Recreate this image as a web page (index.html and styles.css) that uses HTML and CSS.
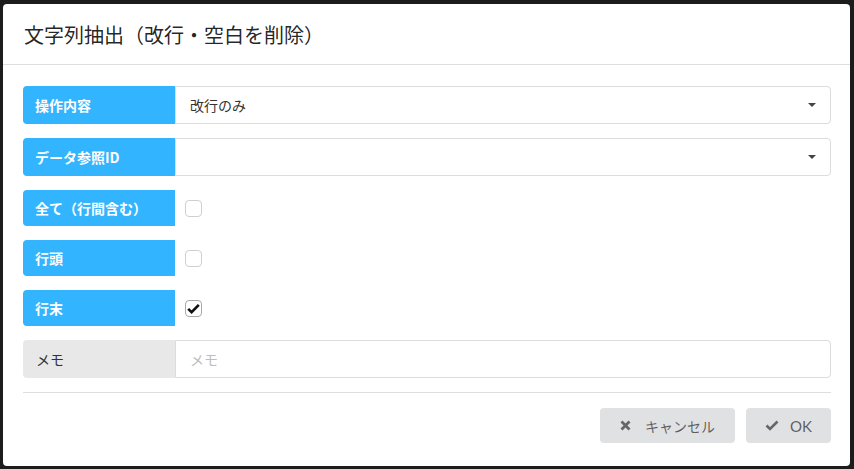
FILE: index.html
```html
<!DOCTYPE html>
<html lang="ja">
<head>
<meta charset="utf-8">
<link rel="stylesheet" href="styles.css">
</head>
<body>
<div class="dialog">
  <div class="header">文字列抽出（改行・空白を削除）</div>
  <div class="content">
    <div class="row">
      <div class="label">操作内容</div>
      <div class="field select"><span class="value">改行のみ</span><span class="caret"></span></div>
    </div>
    <div class="row">
      <div class="label">データ参照ID</div>
      <div class="field select"><span class="value"></span><span class="caret"></span></div>
    </div>
    <div class="row short">
      <div class="label">全て（行間含む）</div>
      <div class="check"></div>
    </div>
    <div class="row short">
      <div class="label">行頭</div>
      <div class="check"></div>
    </div>
    <div class="row short">
      <div class="label">行末</div>
      <div class="check checked"><svg width="13" height="11" viewBox="0 0 13 11"><path d="M1.2 5.8 L4.6 9.2 L11.8 1.8" fill="none" stroke="#111" stroke-width="2.6" stroke-linejoin="miter"/></svg></div>
    </div>
    <div class="row">
      <div class="label gray">メモ</div>
      <div class="field"><span class="placeholder">メモ</span></div>
    </div>
    <div class="divider"></div>
    <div class="actions">
      <button class="btn cancel"><svg width="11" height="11" viewBox="0 0 11 11"><path d="M1.5 1.5 L9.5 9.5 M9.5 1.5 L1.5 9.5" stroke="#666" stroke-width="2.8"/></svg><span>キャンセル</span></button>
      <button class="btn ok"><svg width="14" height="11" viewBox="0 0 14 11"><path d="M1.5 5.5 L5 9 L12.5 1.5" fill="none" stroke="#666" stroke-width="2.6"/></svg><span>OK</span></button>
    </div>
  </div>
</div>
</body>
</html>
```

FILE: styles.css
```css
html, body {
  margin: 0;
  padding: 0;
}
body {
  background: #1c1c1c;
  width: 854px;
  height: 469px;
  padding: 4px 0 0 3px;
  box-sizing: border-box;
  font-family: Lato, "Noto Sans CJK JP", sans-serif;
  overflow: hidden;
}
.dialog {
  width: 847px;
  height: 462px;
  background: #fff;
  border-radius: 4px;
  box-sizing: border-box;
}
.header {
  height: 60px;
  border-bottom: 1px solid #dedede;
  display: flex;
  align-items: center;
  padding: 0 21px;
  font-size: 20px;
  color: rgba(0,0,0,0.87);
  font-family: "Noto Sans CJK JP", sans-serif;
  font-weight: 400;
}
.content {
  padding: 21px 19px 0 20px;
  display: flex;
  flex-direction: column;
  gap: 14px;
}
.row {
  display: flex;
  height: 38px;
  align-items: stretch;
}
.row.short {
  height: 36px;
}
.label {
  width: 152px;
  flex: none;
  background: #33b4fe;
  color: #fff;
  font-weight: 700;
  font-size: 14px;
  display: flex;
  align-items: center;
  padding-left: 12px;
  box-sizing: border-box;
  border-radius: 4px 0 0 4px;
  font-family: "Noto Sans CJK JP", sans-serif;
}
.label.gray {
  background: #e8e8e8;
  color: #333;
  font-weight: 400;
  padding-left: 13px;
}
.field {
  flex: 1;
  border: 1px solid #dcdcdc;
  border-radius: 0 4px 4px 0;
  display: flex;
  align-items: center;
  padding: 0 14px;
  font-size: 14px;
  color: #333;
  font-family: "Noto Sans CJK JP", sans-serif;
}
.select .value {
  flex: 1;
}
.caret {
  width: 0;
  height: 0;
  border-left: 4px solid transparent;
  border-right: 4px solid transparent;
  border-top: 4px solid #444;
  margin-right: 0;
}
.placeholder {
  color: #bdbdbd;
}
.check {
  width: 17px;
  height: 17px;
  box-sizing: border-box;
  border: 1px solid #cfcfcf;
  border-radius: 4px;
  margin-left: 10px;
  align-self: center;
  display: flex;
  align-items: center;
  justify-content: center;
}
.check.checked {
  border-color: #a8a8a8;
}
.divider {
  height: 1px;
  background: #dedede;
}
.actions {
  display: flex;
  justify-content: flex-end;
  gap: 11px;
  margin-top: 1px;
}
.btn {
  height: 35px;
  border: none;
  border-radius: 4px;
  background: #e0e1e2;
  color: rgba(0,0,0,0.6);
  font-family: Lato, "Noto Sans CJK JP", sans-serif;
  font-size: 14px;
  display: flex;
  align-items: center;
  padding: 0;
}
.btn.cancel {
  width: 135px;
  padding-left: 20px;
  gap: 14px;
}
.btn.ok {
  width: 85px;
  padding-left: 19px;
  gap: 11px;
  font-size: 15px;
}
```
